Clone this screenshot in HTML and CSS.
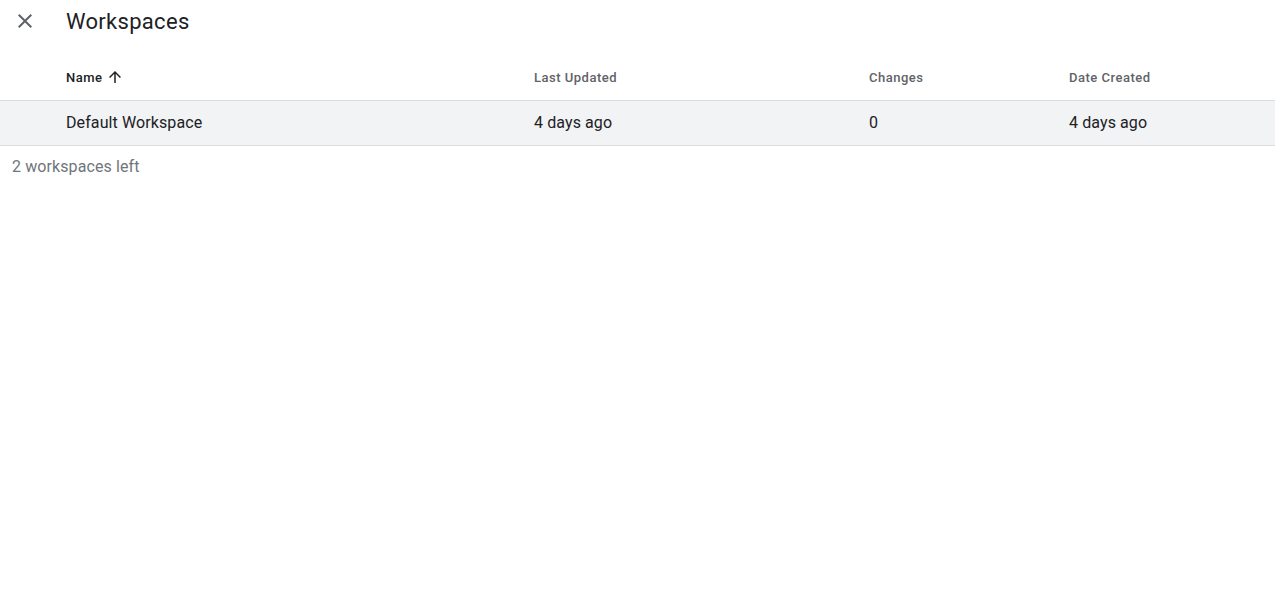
FILE: index.html
```html
<!DOCTYPE html>
<html>
<head>
  <link rel="stylesheet" href="styles.css">
</head>
<body>
  <div class="page">
    <div class="header">
      <button class="close-btn" aria-label="Close">
        <svg viewBox="0 0 24 24" width="24" height="24"><path d="M19 6.41L17.59 5 12 10.59 6.41 5 5 6.41 10.59 12 5 17.59 6.41 19 12 13.41 17.59 19 19 17.59 13.41 12z"/></svg>
      </button>
      <h1 class="title">Workspaces</h1>
    </div>

    <div class="table">
      <div class="row head">
        <div class="cell name sorted">Name
          <svg class="sort-icon" viewBox="0 0 24 24" width="18" height="18"><path d="M4 12l1.41 1.41L11 7.83V20h2V7.83l5.58 5.59L20 12l-8-8-8 8z"/></svg>
        </div>
        <div class="cell updated">Last Updated</div>
        <div class="cell changes">Changes</div>
        <div class="cell created">Date Created</div>
      </div>
      <div class="row item">
        <div class="cell name">Default Workspace</div>
        <div class="cell updated">4 days ago</div>
        <div class="cell changes">0</div>
        <div class="cell created">4 days ago</div>
      </div>
    </div>

    <div class="footer">2 workspaces left</div>
  </div>
</body>
</html>
```

FILE: styles.css
```css
body {
  margin: 0;
  font-family: Roboto, 'Liberation Sans', sans-serif;
  color: #202124;
  background: #fff;
}

.header {
  display: flex;
  align-items: center;
  height: 42px;
}

.close-btn {
  border: none;
  background: none;
  padding: 0;
  margin-left: 13px;
  width: 24px;
  height: 24px;
  cursor: pointer;
  fill: #5f6368;
}

.close-btn svg {
  display: block;
}

.title {
  margin: 0 0 0 29px;
  font-size: 22px;
  font-weight: 400;
  letter-spacing: 0.3px;
  color: #202124;
}

.table {
  margin-top: 14px;
}

.row {
  display: grid;
  grid-template-columns: 534px 335px 200px 1fr;
  align-items: center;
  border-bottom: 1px solid #dadce0;
  box-sizing: border-box;
}

.row .cell.name {
  padding-left: 66px;
}

.row.head {
  height: 45px;
  padding-bottom: 2px;
  font-size: 13px;
  font-weight: 500;
  color: #5f6368;
  letter-spacing: 0.5px;
}

.row.head .cell.name {
  color: #202124;
  display: flex;
  align-items: center;
}

.sort-icon {
  margin-left: 3px;
  fill: #202124;
}

.row.item {
  height: 45px;
  padding-bottom: 1px;
  background: #f1f3f4;
  font-size: 16px;
  letter-spacing: 0.1px;
}

.footer {
  padding: 11px 12px;
  font-size: 16px;
  color: #70757a;
  letter-spacing: 0.1px;
}
```
